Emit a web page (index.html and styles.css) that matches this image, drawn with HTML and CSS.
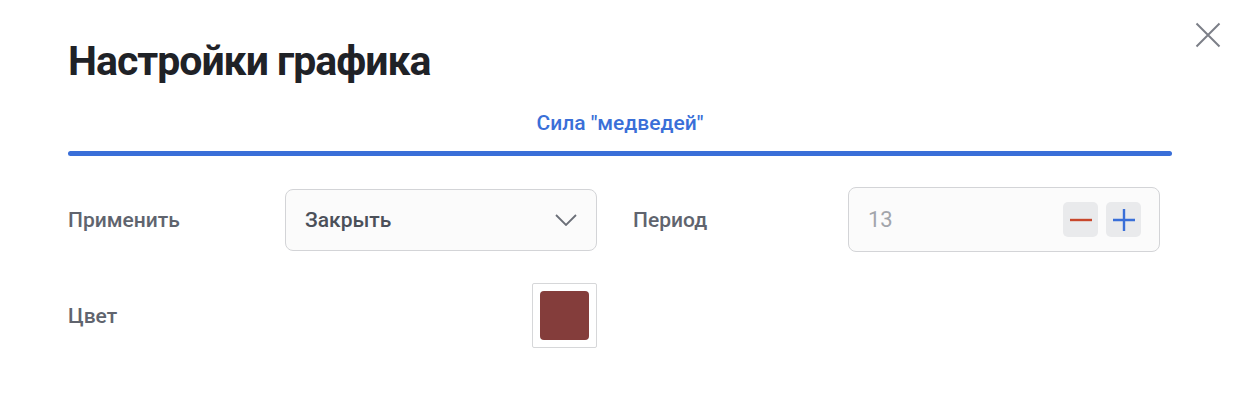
FILE: index.html
```html
<!DOCTYPE html>
<html lang="ru">
<head>
<meta charset="utf-8">
<title>Настройки графика</title>
<link rel="stylesheet" href="styles.css">
</head>
<body>
<div class="dialog">
  <button class="close" aria-label="Закрыть">
    <svg width="26" height="26" viewBox="0 0 26 26"><path d="M1.5 1.5L24.5 24.5M24.5 1.5L1.5 24.5" stroke="#7c7f88" stroke-width="2" fill="none"/></svg>
  </button>
  <h1 class="title">Настройки графика</h1>
  <div class="tabs">
    <div class="tab">Сила "медведей"</div>
    <div class="tab-bar"></div>
  </div>
  <div class="form">
    <div class="row">
      <div class="group">
        <div class="label">Применить</div>
        <div class="select">
          <span class="select-text">Закрыть</span>
          <svg class="chevron" width="22" height="12" viewBox="0 0 22 12"><path d="M1 1L11 11L21 1" stroke="#6b6f78" stroke-width="1.8" fill="none"/></svg>
        </div>
      </div>
      <div class="group group-right">
        <div class="label">Период</div>
        <div class="number">
          <span class="number-text">13</span>
          <div class="steppers">
            <div class="step"><svg width="22" height="22" viewBox="0 0 22 22"><path d="M0 11H22" stroke="#c8472b" stroke-width="2.4"/></svg></div>
            <div class="step"><svg width="22" height="22" viewBox="0 0 22 22"><path d="M0 11H22M11 0V22" stroke="#3a6fd8" stroke-width="2.4"/></svg></div>
          </div>
        </div>
      </div>
    </div>
    <div class="row row-color">
      <div class="group">
        <div class="label">Цвет</div>
        <div class="color-cell">
          <div class="swatch-box"><div class="swatch"></div></div>
        </div>
      </div>
    </div>
  </div>
</div>
</body>
</html>
```

FILE: styles.css
```css
* { box-sizing: border-box; }
html, body { margin: 0; padding: 0; background: #fff; }
body { font-family: Roboto, "Noto Sans", sans-serif; }

.dialog {
  position: relative;
  width: 1246px;
  height: 404px;
  padding: 0 74px 0 68px;
}

.close {
  position: absolute;
  top: 22px;
  right: 25px;
  border: 0;
  background: none;
  padding: 0;
  width: 26px;
  height: 26px;
  cursor: pointer;
}
.close svg { display: block; }

.title {
  margin: 0;
  padding-top: 37px;
  font-size: 41px;
  line-height: 48px;
  font-weight: 700;
  color: #1f2227;
  letter-spacing: -1px;
}

.tabs {
  margin-top: 26px;
}
.tab {
  text-align: center;
  font-size: 21px;
  line-height: 24px;
  font-weight: 500;
  color: #3a6fd8;
  padding-bottom: 16px;
}
.tab-bar {
  height: 5px;
  border-radius: 3px;
  background: #3a6fd8;
}

.form {
  margin-top: 31px;
}
.row {
  display: flex;
  gap: 36px;
}
.row-color { margin-top: 31px; }

.group {
  display: flex;
  align-items: center;
}

.label {
  width: 217px;
  font-size: 21px;
  font-weight: 500;
  color: #60646e;
}
.group-right .label { width: 215px; }

.select {
  width: 312px;
  height: 62px;
  border: 1px solid #d3d4d7;
  border-radius: 8px;
  background: #fbfbfb;
  display: flex;
  align-items: center;
  justify-content: space-between;
  padding: 0 19px 0 19px;
}
.select-text {
  font-size: 21px;
  font-weight: 500;
  color: #4b5059;
}
.chevron { display: block; }

.number {
  width: 312px;
  height: 65px;
  border: 1px solid #d3d4d7;
  border-radius: 8px;
  background: #fbfbfb;
  display: flex;
  align-items: center;
  justify-content: space-between;
  padding: 0 18px 0 19px;
}
.number-text {
  font-size: 22px;
  color: #a2a5ab;
}
.steppers {
  display: flex;
  gap: 8px;
}
.step {
  width: 35px;
  height: 35px;
  border-radius: 5px;
  background: #e9eaec;
  display: flex;
  align-items: center;
  justify-content: center;
}
.step svg { display: block; }

.color-cell {
  width: 312px;
  display: flex;
  justify-content: flex-end;
}
.swatch-box {
  width: 65px;
  height: 65px;
  border: 1px solid #d6d7d9;
  border-radius: 2px;
  padding: 7px;
  background: #fff;
}
.swatch {
  width: 100%;
  height: 100%;
  border-radius: 4px;
  background: #843d3b;
}
```
